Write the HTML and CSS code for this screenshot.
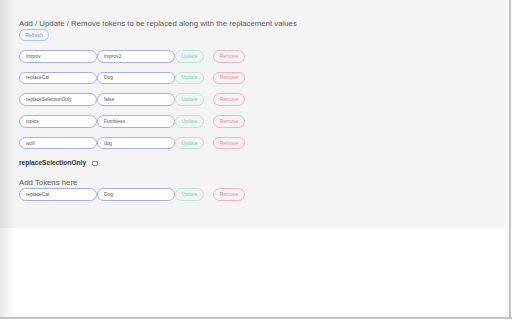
FILE: index.html
```html
<!DOCTYPE html>
<html lang="en">
<head>
  <meta charset="UTF-8" />
  <title>Token Replacer Options</title>
  <link rel="stylesheet" href="styles.css">
</head>
<body>
  <div class="window">
    <div class="page">
      <div class="panel">
        <h2>Add / Update / Remove tokens to be replaced along with the replacement values</h2>
        <button class="btn refresh">Refresh</button>

        <div class="rows">
          <div class="row">
            <input type="text" class="token" value="Improv" />
            <input type="text" class="token" value="Improv2" />
            <button class="btn update">Update</button>
            <button class="btn remove">Remove</button>
          </div>
          <div class="row">
            <input type="text" class="token" value="replaceCat" />
            <input type="text" class="token" value="Dog" />
            <button class="btn update">Update</button>
            <button class="btn remove">Remove</button>
          </div>
          <div class="row">
            <input type="text" class="token" value="replaceSelectionOnly" />
            <input type="text" class="token" value="false" />
            <button class="btn update">Update</button>
            <button class="btn remove">Remove</button>
          </div>
          <div class="row">
            <input type="text" class="token" value="topics" />
            <input type="text" class="token" value="Fumblees" />
            <button class="btn update">Update</button>
            <button class="btn remove">Remove</button>
          </div>
          <div class="row">
            <input type="text" class="token" value="wolf" />
            <input type="text" class="token" value="dog" />
            <button class="btn update">Update</button>
            <button class="btn remove">Remove</button>
          </div>
        </div>

        <label class="option">
          replaceSelectionOnly
          <input type="checkbox" class="check" />
        </label>

        <h3>Add Tokens here</h3>
        <div class="row">
          <input type="text" class="token" value="replaceCat" />
          <input type="text" class="token" value="Dog" />
          <button class="btn update">Update</button>
          <button class="btn remove">Remove</button>
        </div>
      </div>
    </div>
    <div class="strip"></div>
    <div class="edge"></div>
  </div>
  <div class="bottom-edge"></div>
</body>
</html>
```

FILE: styles.css
```css
html, body {
  margin: 0;
  padding: 0;
  background: #fff;
  font-family: "Liberation Sans", Arial, sans-serif;
}

.window {
  display: flex;
  height: 317px;
}

.page {
  position: relative;
  width: 505px;
  background: #fff;
}

/* soft shadow on the left edge */
.page::before {
  content: "";
  position: absolute;
  top: 0;
  left: 0;
  bottom: 0;
  width: 15px;
  background: linear-gradient(to right, rgba(0,0,0,0.09), rgba(0,0,0,0));
  pointer-events: none;
}

.strip {
  width: 4px;
  background: #f8f8f8;
}

.edge {
  width: 2px;
  background: #c2c2c2;
  margin-right: 1px;
}

.bottom-edge {
  height: 2px;
  background: #c2c2c2;
}

.panel {
  background: #f4f4f4;
  height: 228px;
  padding: 18px 0 0 19px;
  box-sizing: border-box;
  display: flex;
  flex-direction: column;
  align-items: flex-start;
}

h2, h3 {
  margin: 0;
  font-size: 7.8px;
  line-height: 11px;
  font-weight: normal;
  color: #5a5a5a;
}

h3 {
  margin-top: 9px;
}

.btn {
  height: 12.5px;
  padding: 0;
  border: 1px solid;
  border-radius: 7px;
  background: transparent;
  font-family: "Liberation Sans", Arial, sans-serif;
  font-size: 5px;
  line-height: 1;
  cursor: pointer;
  box-sizing: border-box;
}

.refresh {
  width: 30px;
  height: 12px;
  border-color: #a9c3ee;
  color: #6f9ce3;
}

.rows {
  display: flex;
  flex-direction: column;
  gap: 9.2px;
  margin-top: 9px;
}

.row {
  display: flex;
  align-items: center;
}

.token {
  width: 78px;
  height: 12.5px;
  box-sizing: border-box;
  border: 1px solid #a8afe6;
  border-radius: 7px;
  background: #fff;
  padding: 0 0 0 6px;
  margin: 0;
  font-family: "Liberation Sans", Arial, sans-serif;
  font-size: 4.8px;
  color: #555;
  outline: none;
}

.update {
  width: 29px;
  border-color: #b4e9d7;
  color: #74d4b2;
}

.remove {
  width: 32px;
  margin-left: 9px;
  border-color: #f4b3bd;
  color: #ee8797;
}

.option {
  display: flex;
  align-items: center;
  gap: 6px;
  margin-top: 9px;
  font-size: 6.6px;
  line-height: 10px;
  font-weight: bold;
  color: #333;
}

.check {
  appearance: none;
  width: 5.5px;
  height: 5.5px;
  margin: 0;
  border: 1px solid #8a8a8a;
  border-radius: 1px;
  background: #fff;
}
```
